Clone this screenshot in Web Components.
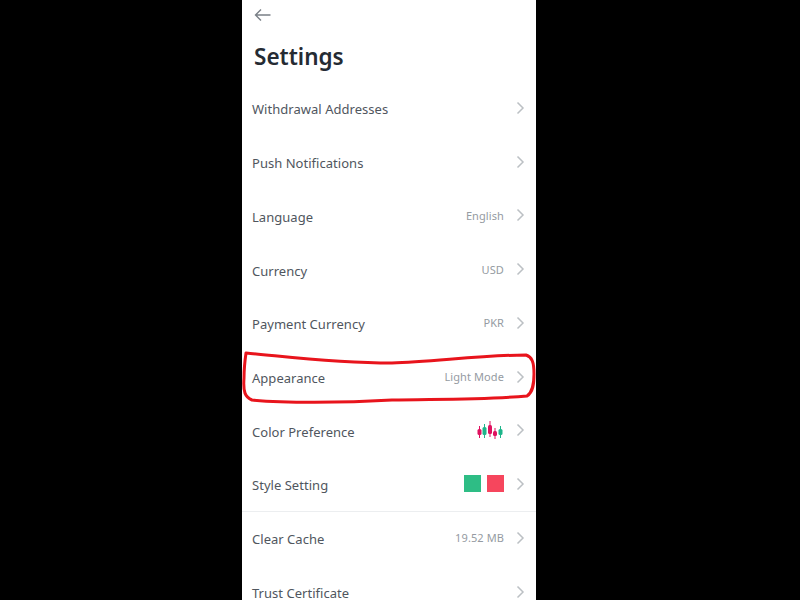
<!DOCTYPE html>
<html>
<head>
<meta charset="utf-8">
<title>Settings</title>
<style>
  html, body { margin: 0; height: 100%; background: #000; overflow: hidden; }
</style>
</head>
<body>
<settings-screen>
  <settings-row label="Withdrawal Addresses"></settings-row>
  <settings-row label="Push Notifications"></settings-row>
  <settings-row label="Language" value="English"></settings-row>
  <settings-row label="Currency" value="USD"></settings-row>
  <settings-row label="Payment Currency" value="PKR"></settings-row>
  <settings-row label="Appearance" value="Light Mode"></settings-row>
  <settings-row label="Color Preference">
    <svg width="28" height="20" viewBox="0 0 28 20">
      <g stroke-width="1">
        <path d="M3.500 6v12" stroke="#e0115f"/><rect x="1.500" y="9" width="4" height="6" rx="1.500" fill="#e0115f"/>
        <path d="M8.500 4v14" stroke="#1db58a"/><rect x="6.500" y="7" width="4" height="8" rx="1.500" fill="#1db58a"/>
        <path d="M14 1v16" stroke="#e0115f"/><rect x="12" y="5" width="4" height="9" rx="1.500" fill="#e0115f"/>
        <path d="M19 8v11" stroke="#e0115f"/><rect x="17" y="11" width="4" height="5" rx="1.500" fill="#e0115f"/>
        <path d="M24.500 6v12" stroke="#1db58a"/><rect x="22.500" y="9" width="4" height="6" rx="1.500" fill="#1db58a"/>
      </g>
    </svg>
  </settings-row>
  <settings-row label="Style Setting" divider>
    <color-swatches></color-swatches>
  </settings-row>
  <settings-row label="Clear Cache" value="19.52 MB"></settings-row>
  <settings-row label="Trust Certificate"></settings-row>
</settings-screen>

<script>
// one line in the settings list
class SettingsRow extends HTMLElement {
  constructor() {
    super();
    const shadow = this.attachShadow({mode: "open"});
    shadow.innerHTML = `<style>
      :host {
        display: block;
        box-sizing: border-box;
        height: 53.75px;
        flex: none;
        color: #50565e;
      }
      :host([divider]) { border-bottom: 1px solid #eceef0; }
      :host([divider]) .label { margin-top: -1px; }
      .row {
        display: flex;
        align-items: center;
        height: 53.75px;
        padding: 0 11px 0 10px;
      }
      .label { flex: 1; font-size: 13px; letter-spacing: 0.03px; }
      .value {
        display: flex;
        align-items: center;
        font-size: 11px;
        letter-spacing: 0.1px;
        color: #959ba2;
        margin-top: -3px;
      }
      svg.chev { margin-left: 12px; margin-top: -3px; }
    </style>
    <div class="row">
      <span class="label"></span>
      <span class="value"><slot></slot></span>
      <svg class="chev" width="9" height="14" viewBox="0 0 9 14" fill="none" stroke="#bcc0c4" stroke-width="1.5"><path d="M1.500 1.500 7 7l-5.500 5.500"/></svg>
    </div>`;
    shadow.querySelector(".label").textContent = this.getAttribute("label");
    if (this.hasAttribute("value")) {
      shadow.querySelector(".value").prepend(this.getAttribute("value"));
    }
  }
}

// green and red squares of the style setting
class ColorSwatches extends HTMLElement {
  constructor() {
    super();
    const shadow = this.attachShadow({mode: "open"});
    shadow.innerHTML = `<style>
      :host { display: flex; gap: 6px; margin-top: -1px; }
      i { display: block; width: 17px; height: 17px; }
      .up { background: #2ebd85; }
      .down { background: #f6465d; }
    </style>
    <i class="up"></i><i class="down"></i>`;
  }
}

// the phone column with header, list and the red marker stroke
class SettingsScreen extends HTMLElement {
  constructor() {
    super();
    const shadow = this.attachShadow({mode: "open"});
    shadow.innerHTML = `<style>
      :host {
        display: block;
        position: relative;
        box-sizing: border-box;
        width: 294px;
        height: 600px;
        margin-left: 242px;
        background: #fff;
        overflow: hidden;
        font-family: "Noto Sans", Roboto, sans-serif;
      }
      header { height: 82.4px; padding: 8px 0 0 12px; box-sizing: border-box; }
      .back { display: block; }
      h1 {
        margin: 19px 0 0;
        font-size: 22.5px;
        line-height: 32px;
        font-weight: 600;
        color: #252b33;
      }
      .list { display: flex; flex-direction: column; }
      .marker { position: absolute; left: 0; top: 350px; pointer-events: none; }
    </style>
    <header>
      <svg class="back" width="17" height="14" viewBox="0 0 17 14" fill="none" stroke="#7a8087" stroke-width="1.4"><path d="M16.500 7H1.500M7 1.500 1.500 7 7 12.500"/></svg>
      <h1>Settings</h1>
    </header>
    <div class="list"><slot></slot></div>
    <svg class="marker" width="294" height="56" viewBox="0 0 294 56" fill="none" stroke="#e8141c" stroke-width="3" stroke-linejoin="round">
      <path d="M4 3C40 6 90 13 150 13C190 12 240 5 284 5C290 7 292 12 292 24C292 34 291 42 285 46C240 50 190 49 150 50C100 53 40 53 10 50C3 47 1 42 2 28C2 18 3 10 4 3Z"/>
    </svg>`;
  }
}

customElements.define("settings-row", SettingsRow);
customElements.define("color-swatches", ColorSwatches);
customElements.define("settings-screen", SettingsScreen);
</script>
</body>
</html>
